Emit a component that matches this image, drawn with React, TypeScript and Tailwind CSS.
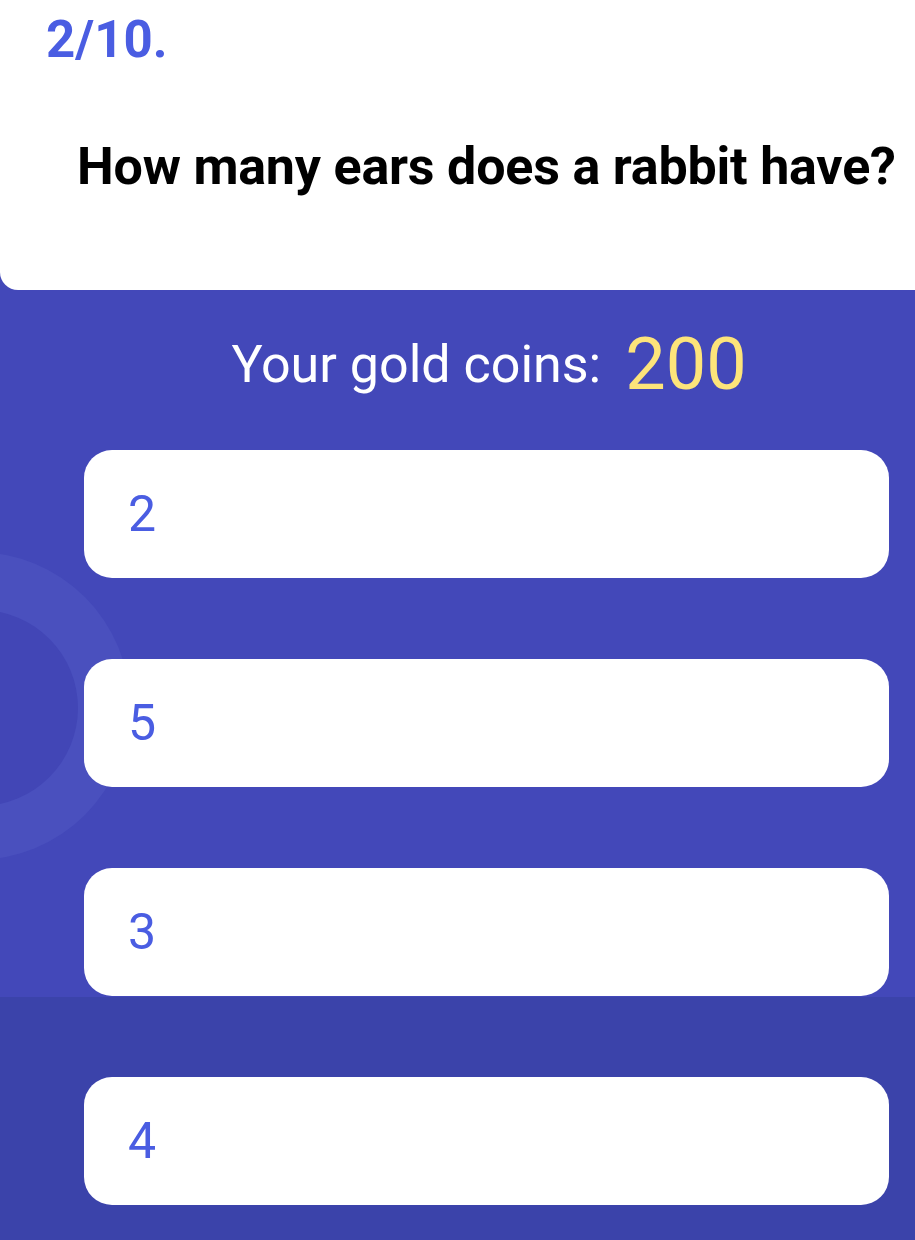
import React from "react";

const options = ["2", "5", "3", "4"];

export default function App() {
  return (
    <div
      className="relative w-[915px] h-[1240px] overflow-hidden bg-[#4348b9]"
      style={{ fontFamily: "Roboto, 'Liberation Sans', sans-serif" }}
    >
      {/* bottom darker band */}
      <div className="absolute left-0 right-0 top-[997px] bottom-0 bg-[#3b43aa]" />
      {/* decorative ring */}
      <div className="absolute left-[-178px] top-[552px] w-[308px] h-[308px] rounded-full bg-[#4a50be]" />
      <div className="absolute left-[-118px] top-[610px] w-[196px] h-[196px] rounded-full bg-[#4246b6]" />

      <div className="relative flex flex-col">
        {/* header */}
        <div className="h-[290px] bg-white rounded-bl-[18px] flex flex-col">
          <div className="pl-[46px] pt-[10px] text-[51px] leading-[60px] font-bold text-[#4a5de2]">
            2/10.
          </div>
          <div className="pl-[77px] mt-[67px] text-[52px] leading-[60px] font-bold text-black tracking-[-0.2px]">
            How many ears does a rabbit have?
          </div>
        </div>

        {/* coins */}
        <div className="flex justify-center pl-[63px] pt-[40px] h-[160px]">
          <div className="flex items-center gap-[24px] h-[70px]">
            <span className="text-[52px] leading-[70px] text-white">Your gold coins:</span>
            <span className="text-[72px] leading-[70px] text-[#fde47a]">200</span>
          </div>
        </div>

        {/* options */}
        <div className="flex flex-col gap-[81px] pl-[84px] pr-[26px]">
          {options.map((o) => (
            <div
              key={o}
              className="h-[128px] bg-white rounded-[28px] flex items-center pl-[44px] text-[50px] text-[#4a5de2]"
            >
              {o}
            </div>
          ))}
        </div>
      </div>
    </div>
  );
}
